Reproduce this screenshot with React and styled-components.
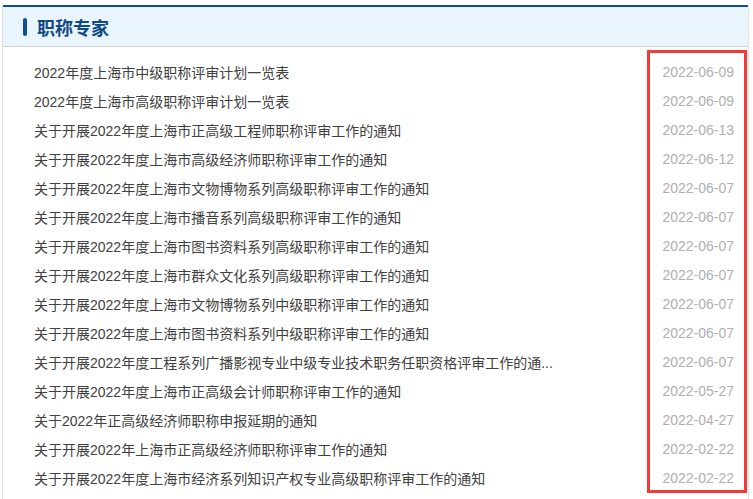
import { createGlobalStyle, styled } from "styled-components";

const GlobalStyle = createGlobalStyle`
  * { box-sizing: border-box; }
  body {
    margin: 0;
    background: #fff;
    font-family: "Liberation Sans", "Noto Sans CJK SC", sans-serif;
  }
`;

const Panel = styled.div`
  margin: 5px 4px 0 2px;
  border-left: 1px solid #e3e3e3;
  border-right: 1px solid #e3e3e3;
  height: 494px;
  overflow: hidden;
`;

const Header = styled.div`
  display: flex;
  align-items: center;
  gap: 10px;
  height: 42px;
  padding-left: 20px;
  background: #eaf4fd;
  border-top: 2px solid #0d4f97;
  border-bottom: 1px solid #cfd3d8;
`;

const Bar = styled.span`
  width: 4px;
  height: 18px;
  border-radius: 2px;
  background: #0d4f97;
`;

const Title = styled.h2`
  margin: 0;
  font-size: 18px;
  font-weight: bold;
  color: #0f4a87;
  font-family: "Noto Sans CJK SC", sans-serif;
`;

const List = styled.ul`
  position: relative;
  list-style: none;
  margin: 0;
  padding: 10px 14px 0 31px;
`;

const Row = styled.li`
  display: flex;
  align-items: center;
  justify-content: space-between;
  height: 29px;
  font-size: 14px;
`;

const Link = styled.a`
  flex: 1;
  max-width: 540px;
  color: #404040;
  text-decoration: none;
  white-space: nowrap;
  overflow: hidden;
  text-overflow: ellipsis;
`;

const Date = styled.span`
  color: #b0b0b0;
  font-family: "Liberation Sans", sans-serif;
`;

const Highlight = styled.div`
  position: absolute;
  top: 3px;
  left: 644px;
  width: 100px;
  height: 443px;
  border: 3px solid #f23a3a;
  pointer-events: none;
`;

const items = [
  ["2022年度上海市中级职称评审计划一览表", "2022-06-09"],
  ["2022年度上海市高级职称评审计划一览表", "2022-06-09"],
  ["关于开展2022年度上海市正高级工程师职称评审工作的通知", "2022-06-13"],
  ["关于开展2022年度上海市高级经济师职称评审工作的通知", "2022-06-12"],
  ["关于开展2022年度上海市文物博物系列高级职称评审工作的通知", "2022-06-07"],
  ["关于开展2022年度上海市播音系列高级职称评审工作的通知", "2022-06-07"],
  ["关于开展2022年度上海市图书资料系列高级职称评审工作的通知", "2022-06-07"],
  ["关于开展2022年度上海市群众文化系列高级职称评审工作的通知", "2022-06-07"],
  ["关于开展2022年度上海市文物博物系列中级职称评审工作的通知", "2022-06-07"],
  ["关于开展2022年度上海市图书资料系列中级职称评审工作的通知", "2022-06-07"],
  ["关于开展2022年度工程系列广播影视专业中级专业技术职务任职资格评审工作的通...", "2022-06-07"],
  ["关于开展2022年度上海市正高级会计师职称评审工作的通知", "2022-05-27"],
  ["关于2022年正高级经济师职称申报延期的通知", "2022-04-27"],
  ["关于开展2022年上海市正高级经济师职称评审工作的通知", "2022-02-22"],
  ["关于开展2022年度上海市经济系列知识产权专业高级职称评审工作的通知", "2022-02-22"],
];

const App = () => {
  return (
    <>
      <GlobalStyle />
      <Panel>
        <Header>
          <Bar />
          <Title>职称专家</Title>
        </Header>
        <List>
          {items.map(([text, date], i) => (
            <Row key={i}>
              <Link href="#">{text}</Link>
              <Date>{date}</Date>
            </Row>
          ))}
          <Highlight />
        </List>
      </Panel>
    </>
  );
};

export default App;
